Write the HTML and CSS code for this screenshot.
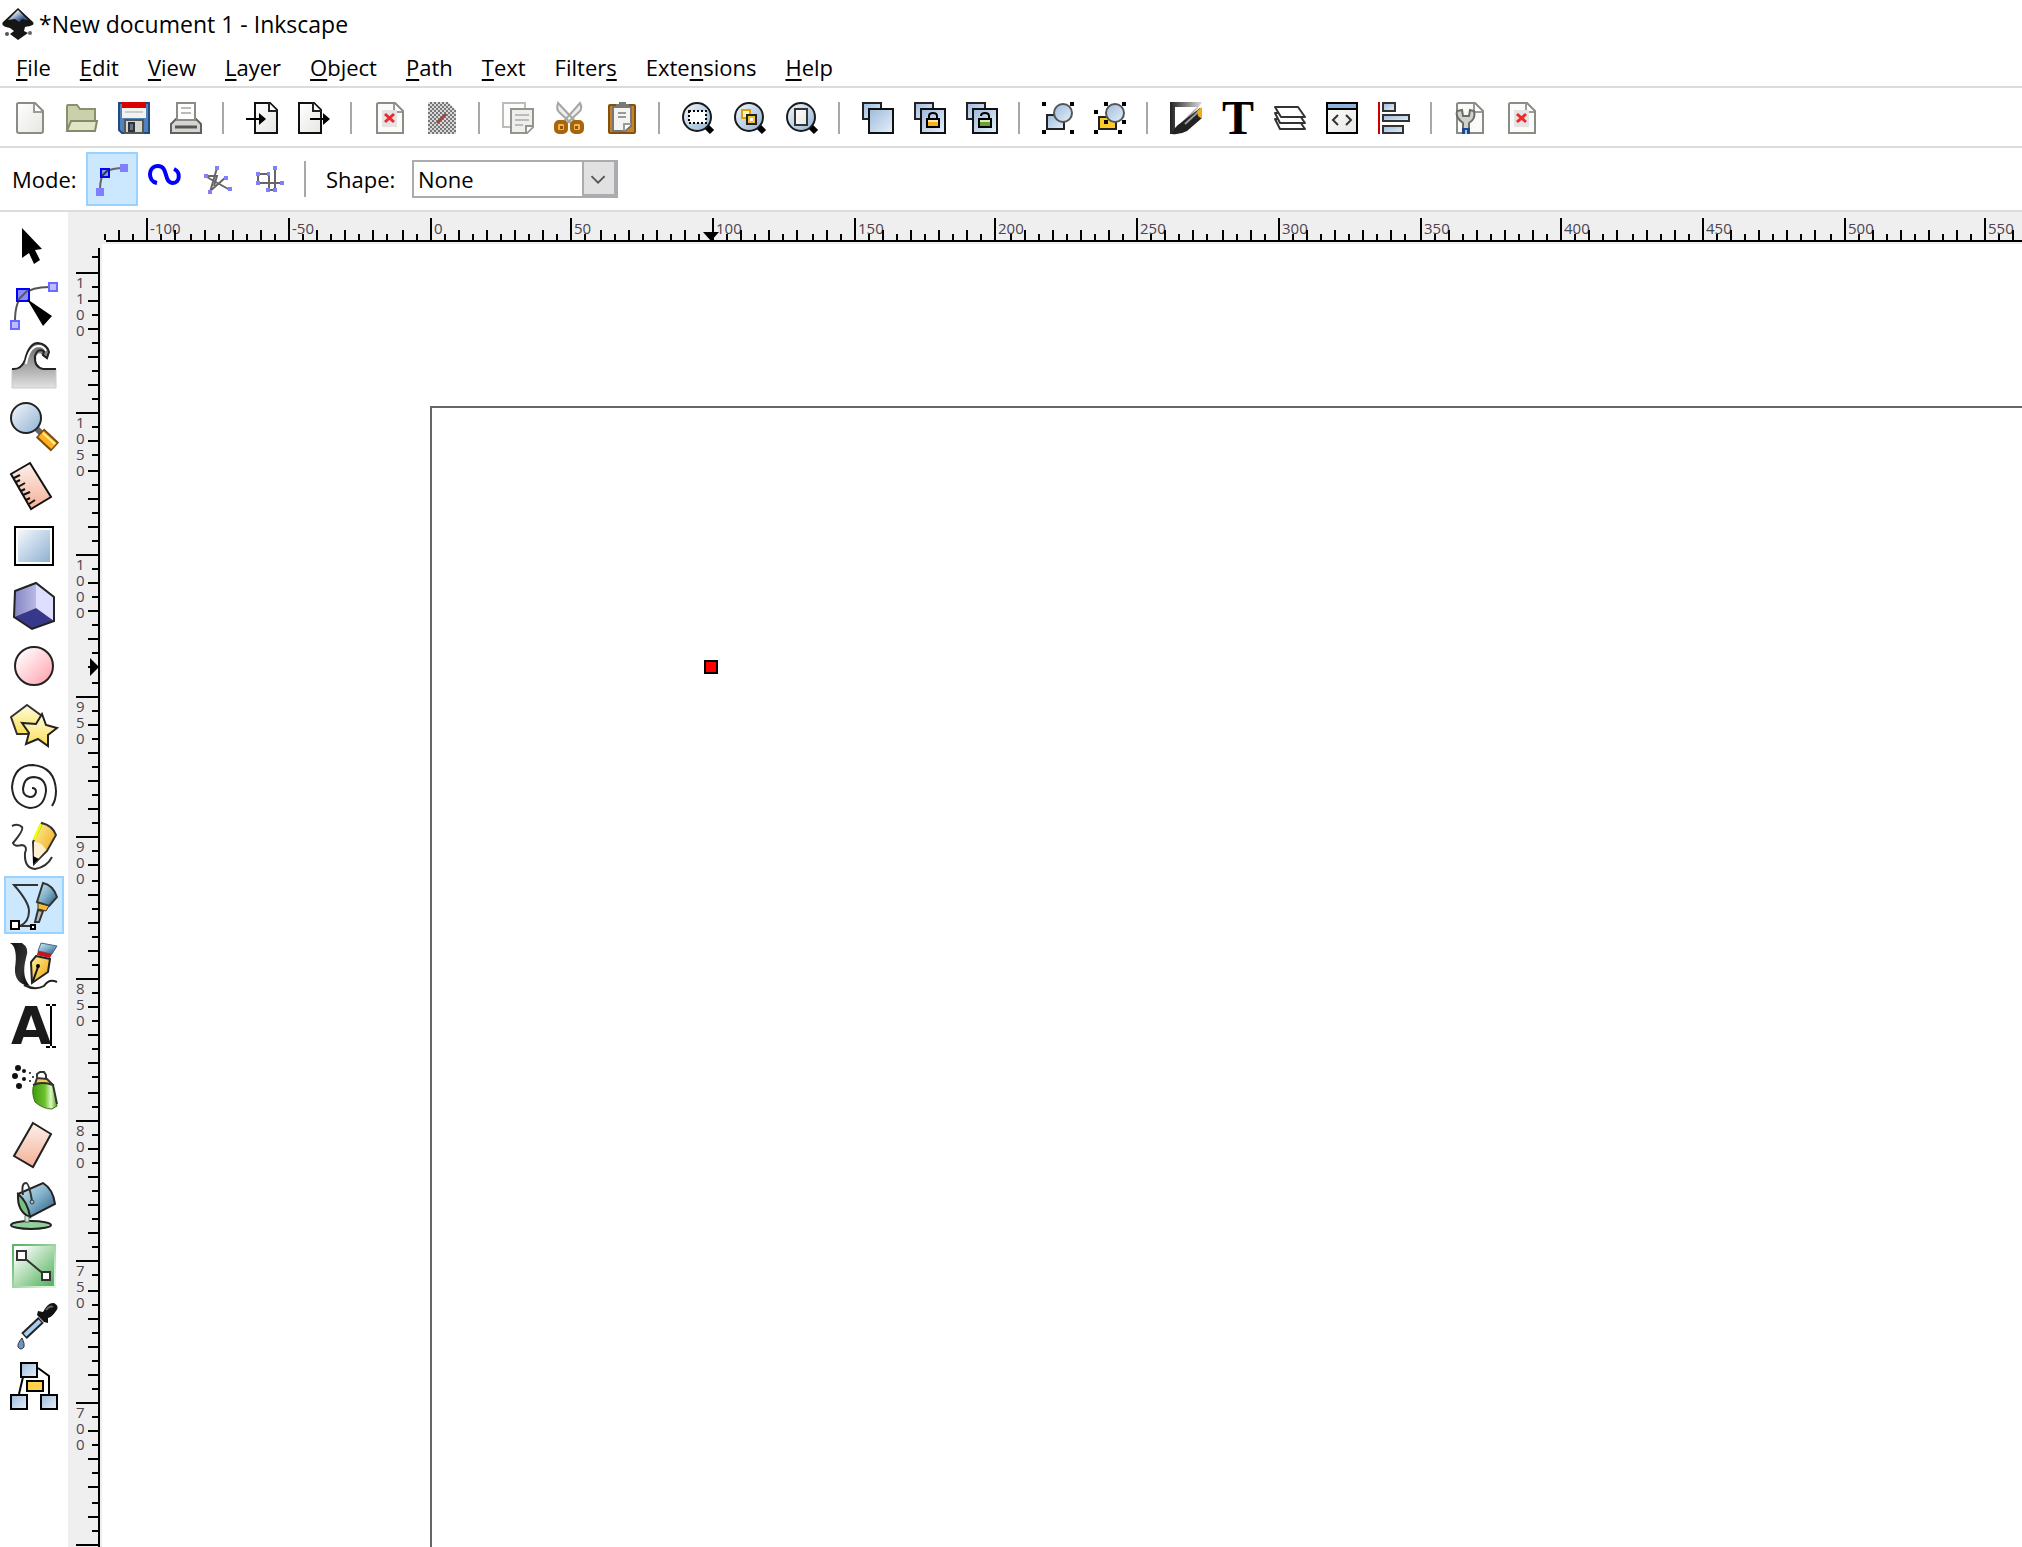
FILE: index.html
```html
<!DOCTYPE html>
<html lang="en">
<head>
<meta charset="utf-8">
<title>*New document 1 - Inkscape</title>
<link rel="stylesheet" href="styles.css">
</head>
<body>
<svg class="defs" aria-hidden="true">
  <defs>
    <linearGradient id="paper" x1="0" y1="0" x2="1" y2="1"><stop offset="0" stop-color="#fff"/><stop offset="1" stop-color="#e6e6e2"/></linearGradient>
    <linearGradient id="blue" x1="0" y1="0" x2="1" y2="1"><stop offset="0" stop-color="#f4f8fc"/><stop offset="1" stop-color="#8fb1d3"/></linearGradient>
    <linearGradient id="bluerev" x1="0" y1="0" x2="1" y2="1"><stop offset="0" stop-color="#9dbbdc"/><stop offset="1" stop-color="#e6eff8"/></linearGradient>
    <linearGradient id="steel" x1="0" y1="0" x2="1" y2="1"><stop offset="0" stop-color="#d5ecf2"/><stop offset=".5" stop-color="#7fb0c8"/><stop offset="1" stop-color="#27517f"/></linearGradient>
    <linearGradient id="pink" x1="0" y1="0" x2="1" y2="1"><stop offset=".1" stop-color="#fff"/><stop offset="1" stop-color="#ff9ca8"/></linearGradient>
    <linearGradient id="peach" x1="0" y1="0" x2="0" y2="1"><stop offset="0" stop-color="#fdf0ea"/><stop offset="1" stop-color="#f3b096"/></linearGradient>
    <linearGradient id="yellow" x1="0" y1="0" x2="0" y2="1"><stop offset="0" stop-color="#fffbe6"/><stop offset="1" stop-color="#fbe04e"/></linearGradient>
    <linearGradient id="gold" x1="0" y1="0" x2="1" y2="1"><stop offset="0" stop-color="#fff3a0"/><stop offset="1" stop-color="#ee9a00"/></linearGradient>
    <linearGradient id="green" x1="0" y1="0" x2="1" y2="0"><stop offset="0" stop-color="#3f9a0b"/><stop offset=".5" stop-color="#6cc32b"/><stop offset=".75" stop-color="#dcf8c0"/><stop offset="1" stop-color="#4ea318"/></linearGradient>
    <linearGradient id="meadow" x1="0" y1="0" x2="1" y2="1"><stop offset=".1" stop-color="#fff"/><stop offset=".9" stop-color="#5db766"/></linearGradient>
    <linearGradient id="meadow-edge" x1="0" y1="0" x2="1" y2="1"><stop offset=".1" stop-color="#5db766"/><stop offset=".9" stop-color="#e0f2e2"/></linearGradient>
    <linearGradient id="gray" x1="0" y1="0" x2="0" y2="1"><stop offset="0" stop-color="#666"/><stop offset="1" stop-color="#e2e2e2"/></linearGradient>
    <linearGradient id="ink" x1="0" y1="0" x2="1" y2="1"><stop offset="0" stop-color="#111"/><stop offset=".6" stop-color="#333"/><stop offset="1" stop-color="#000"/></linearGradient>
    <linearGradient id="frame" x1="0" y1="0" x2="1" y2="0"><stop offset="0" stop-color="#222"/><stop offset="1" stop-color="#ddd"/></linearGradient>
    <linearGradient id="purple" x1="0" y1="0" x2="1" y2="0"><stop offset="0" stop-color="#8484c4"/><stop offset="1" stop-color="#b9b9e4"/></linearGradient>
    <linearGradient id="logo" x1="0" y1="0" x2="1" y2="1"><stop offset=".2" stop-color="#fff"/><stop offset=".7" stop-color="#3d5f94"/></linearGradient>
    <pattern id="dither" width="4" height="4" patternUnits="userSpaceOnUse"><path d="M0 0h2v2H0zM2 2h2v2H2z" fill="#777"/></pattern>
  </defs>
</svg>

<header class="titlebar">
  <svg class="logo" viewBox="0 0 32 34"><path d="M16 1 31 15C33 18 29 19 23 20L22 24 26 26 16 33 8 27 12 24 8 21C2 20-1 18 1 15Z" fill="#161616"/><path d="M16 3 26 13 20 12 17 15 13 12 6 13Z" fill="url(#logo)"/><circle cx="5" cy="27" r="2" fill="#555"/><circle cx="28" cy="26" r="2" fill="#666"/></svg>
  <h1 class="title">*New document 1 - Inkscape</h1>
</header>

<nav class="menubar" aria-label="Main menu">
  <button><u>F</u>ile</button><button><u>E</u>dit</button><button><u>V</u>iew</button><button><u>L</u>ayer</button><button><u>O</u>bject</button><button><u>P</u>ath</button><button><u>T</u>ext</button><button>Filter<u>s</u></button><button>Exte<u>n</u>sions</button><button><u>H</u>elp</button>
</nav>

<div class="toolbar" role="toolbar" aria-label="Commands">
  <button aria-label="New"><svg viewBox="0 0 32 32"><path d="M4 1H21L29 9V29Q29 31 27 31H5Q3 31 3 29V2Z" fill="url(#paper)" stroke="#8a8c86" stroke-width="2"/><path d="M20 2V10H28" fill="#fff" stroke="#9a9c96" stroke-width="2"/></svg></button>
  <button aria-label="Open"><svg viewBox="0 0 32 32"><path d="M1 28V4Q1 3 2 3H11L14 7H29V20" fill="#c9d0aa" stroke="#8b8f72" stroke-width="2"/><path d="M1 29 5 19H31L29 29Z" fill="#dfe6c4" stroke="#84886c" stroke-width="2"/></svg></button>
  <button aria-label="Save"><svg viewBox="0 0 32 32"><path d="M1 1H31V31H4L1 28Z" fill="#4f83bd" stroke="#234a80" stroke-width="2"/><path d="M4 0H28V6H4Z" fill="#d90000"/><path d="M4 6H28V16H4Z" fill="#f2f2ee"/><path d="M7 10H25" stroke="#ccc" stroke-width="2"/><path d="M7 18H25V31H7Z" fill="#d3d7cf" stroke="#555753" stroke-width="2"/><rect x="11" y="21" width="5" height="8" fill="#5a7396" stroke="#333" stroke-width="2"/></svg></button>
  <button aria-label="Print"><svg viewBox="0 0 32 32"><path d="M1 22 6 17H26L31 22V31H1Z" fill="#d3d5d0" stroke="#5f615c" stroke-width="2"/><path d="M7 18V1H25V18Z" fill="#fff" stroke="#8a8c86" stroke-width="2"/><path d="M11 6H21M11 11H21" stroke="#bbb" stroke-width="2"/><path d="M5 25H27" stroke="#555" stroke-width="3"/></svg></button>
  <span class="sep"></span>
  <button aria-label="Import"><svg viewBox="0 0 32 32"><path d="M9 1H24L31 8V31H9Z" fill="url(#paper)" stroke="#111" stroke-width="2"/><path d="M23 1V9H31" fill="#fff" stroke="#222" stroke-width="2"/><path d="M0 17H14" stroke="#000" stroke-width="2"/><path d="M13 11 20 17 13 23Z"/></svg></button>
  <button aria-label="Export"><svg viewBox="0 0 32 32"><path d="M1 1H16L23 8V31H1Z" fill="url(#paper)" stroke="#111" stroke-width="2"/><path d="M15 1V9H23" fill="#fff" stroke="#222" stroke-width="2"/><path d="M12 17H27" stroke="#000" stroke-width="2"/><path d="M25 11 32 17 25 23Z"/></svg></button>
  <span class="sep"></span>
  <button aria-label="Undo"><svg viewBox="0 0 32 32"><path d="M4 1H21L29 9V31H3V2Z" fill="#fbfbfa" stroke="#8a8c86" stroke-width="2"/><path d="M20 2V10H28" fill="#fff" stroke="#9a9c96" stroke-width="2"/><rect x="8" y="8" width="15" height="17" fill="#e4e4e4"/><path d="M11 12 20 20M20 12 11 20" stroke="#ef2929" stroke-width="3"/></svg></button>
  <button aria-label="Redo"><svg viewBox="0 0 32 32"><path d="M3 0H22L30 8V32H2V1Z" fill="#d8d8d8"/><path d="M3 0H22L30 8V32H2V1Z" fill="url(#dither)"/><path d="M11 21 20 12" stroke="#a23a3a" stroke-width="2"/></svg></button>
  <span class="sep"></span>
  <button aria-label="Copy"><svg viewBox="0 0 32 32"><path d="M1 1H23V25H1Z" fill="#fcfcfc" stroke="#bcbdb9" stroke-width="2"/><path d="M9 7H31V25L25 31H9Z" fill="#eeeeec" stroke="#92948e" stroke-width="2"/><path d="M13 13H27M13 18H27M13 23H21" stroke="#bbb" stroke-width="2"/><path d="M31 24H24V31" fill="#fff" stroke="#92948e" stroke-width="2"/></svg></button>
  <button aria-label="Cut"><svg viewBox="0 0 32 32"><path d="M4 1Q2 7 5 10L18 22 20 18ZM26 1Q29 7 25 10L12 22 11 18Z" fill="#eee" stroke="#a4a6a0" stroke-width="2"/><rect x="2" y="20" width="10" height="10" rx="3" fill="#f3b254" stroke="#a8650a" stroke-width="4"/><rect x="18" y="20" width="10" height="10" rx="3" fill="#f3b254" stroke="#a8650a" stroke-width="4"/><path d="M6 24H9V27H6ZM21 24H24V27H21Z" fill="#8f5902"/></svg></button>
  <button aria-label="Paste"><svg viewBox="0 0 32 32"><rect x="3" y="3" width="26" height="28" rx="1" fill="#c4842a" stroke="#84500a" stroke-width="2"/><path d="M7 5H25V24L19 29H7Z" fill="#f4f4f2" stroke="#777" stroke-width="2"/><path d="M10 5V2H13V0H20V2H23V6H10Z" fill="#777973"/><path d="M12 11H20M12 15H20" stroke="#999" stroke-width="2"/><path d="M25 22H18V29" fill="#fff" stroke="#999" stroke-width="2"/></svg></button>
  <span class="sep"></span>
  <button aria-label="Zoom selection"><svg viewBox="0 0 32 32"><path d="M24 24 30 30" stroke="#000" stroke-width="6"/><circle cx="15" cy="15" r="14" fill="url(#blue)" stroke="#1a1a1a" stroke-width="2"/><rect x="7" y="9" width="17" height="12" fill="#fff" stroke="#000" stroke-width="2" stroke-dasharray="2 2"/></svg></button>
  <button aria-label="Zoom drawing"><svg viewBox="0 0 32 32"><path d="M24 24 30 30" stroke="#000" stroke-width="6"/><circle cx="15" cy="15" r="14" fill="url(#blue)" stroke="#1a1a1a" stroke-width="2"/><rect x="8" y="8" width="8" height="8" fill="#fff3c4" stroke="#e0a000" stroke-width="2"/><rect x="13" y="13" width="9" height="9" fill="#ffe9a8" stroke="#222" stroke-width="2"/><rect x="15" y="15" width="5" height="5" fill="#fff" stroke="#f5c230" stroke-width="2"/></svg></button>
  <button aria-label="Zoom page"><svg viewBox="0 0 32 32"><path d="M24 24 30 30" stroke="#000" stroke-width="6"/><circle cx="15" cy="15" r="14" fill="url(#blue)" stroke="#1a1a1a" stroke-width="2"/><rect x="9" y="7" width="12" height="16" fill="url(#paper)" stroke="#333" stroke-width="2"/></svg></button>
  <span class="sep"></span>
  <button aria-label="Duplicate"><svg viewBox="0 0 32 32"><rect x="1" y="1" width="18" height="16" fill="url(#bluerev)" stroke="#222" stroke-width="2"/><rect x="7" y="7" width="24" height="24" fill="url(#bluerev)" stroke="#111" stroke-width="2"/></svg></button>
  <button aria-label="Clone"><svg viewBox="0 0 32 32"><rect x="1" y="1" width="18" height="16" fill="url(#bluerev)" stroke="#222" stroke-width="2"/><rect x="7" y="7" width="24" height="24" fill="url(#bluerev)" stroke="#111" stroke-width="2"/><path d="M15 17V14Q15 11 19 11T23 14V17" fill="none" stroke="#000" stroke-width="2"/><rect x="13" y="17" width="12" height="8" fill="#f7b21a" stroke="#000" stroke-width="2"/><path d="M14 18H24V20H14Z" fill="#ffe9a0"/></svg></button>
  <button aria-label="Unlink clone"><svg viewBox="0 0 32 32"><rect x="1" y="1" width="18" height="16" fill="url(#bluerev)" stroke="#222" stroke-width="2"/><rect x="7" y="7" width="24" height="24" fill="url(#bluerev)" stroke="#111" stroke-width="2"/><path d="M15 14Q15 11 19 11T23 14V17" fill="none" stroke="#000" stroke-width="2"/><rect x="13" y="17" width="12" height="8" fill="#69a033" stroke="#000" stroke-width="2"/><path d="M14 18H24V20H14Z" fill="#d3efb0"/></svg></button>
  <span class="sep"></span>
  <button aria-label="Group"><svg viewBox="0 0 32 32"><path d="M0 0H4V4H0ZM28 0H32V4H28ZM0 28H4V32H0ZM28 28H32V32H28Z"/><rect x="5" y="13" width="17" height="14" fill="url(#bluerev)" stroke="#222" stroke-width="2"/><circle cx="21" cy="11" r="9" fill="url(#bluerev)" stroke="#555" stroke-width="2"/></svg></button>
  <button aria-label="Ungroup"><svg viewBox="0 0 32 32"><rect x="5" y="15" width="17" height="12" fill="#ffc928" stroke="#222" stroke-width="2"/><circle cx="21" cy="11" r="9" fill="url(#bluerev)" stroke="#555" stroke-width="2"/><path d="M0 8H4V12H0ZM10 0H14V4H10ZM28 0H32V4H28ZM28 18H32V22H28ZM10 18H14V22H10ZM0 28H4V32H0ZM24 28H28V32H24Z"/></svg></button>
  <span class="sep"></span>
  <button aria-label="Fill and stroke"><svg viewBox="0 0 32 32"><path d="M0 0H32L28 6 3 32H0Z" fill="url(#frame)"/><path d="M5 5H27L5 27Z" fill="#fff"/><path d="M2 32Q4 25 12 20L30 6 32 8V16L17 29Q10 33 2 32Z" fill="#222"/><path d="M15 22 29 9" stroke="#999" stroke-width="2"/><path d="M27 9 32 5V17L28 14Z" fill="#f0ad14"/></svg></button>
  <button aria-label="Text and font"><svg viewBox="0 0 32 32"><text class="glyph-t" x="16" y="32" text-anchor="middle">T</text></svg></button>
  <button aria-label="Layers"><svg viewBox="0 0 32 32"><g fill="#fff" stroke="#333" stroke-width="2" stroke-linejoin="round"><path d="M1 17 6 27H31L24 17Z"/><path d="M1 11 6 21H31L24 11Z"/><path d="M1 5H24L31 15H7Z"/></g></svg></button>
  <button aria-label="XML editor"><svg viewBox="0 0 32 32"><rect x="1" y="1" width="30" height="30" fill="url(#paper)" stroke="#000" stroke-width="2"/><path d="M2 2H30V6H2Z" fill="#8fb4dc"/><path d="M1 7H31" stroke="#000" stroke-width="2"/><path d="M12 13 7 18 12 23M20 13 25 18 20 23" fill="none" stroke="#333" stroke-width="2"/></svg></button>
  <button aria-label="Align and distribute"><svg viewBox="0 0 32 32"><path d="M0 0H2V32H0Z" fill="#c00"/><g fill="url(#bluerev)" stroke="#333" stroke-width="2"><rect x="5" y="1" width="12" height="8"/><rect x="5" y="13" width="26" height="6"/><rect x="5" y="24" width="20" height="7"/></g></svg></button>
  <span class="sep"></span>
  <button aria-label="Preferences"><svg viewBox="0 0 32 32"><path d="M4 1H21L29 9V31H3V2Z" fill="#fafaf8" stroke="#8a8c86" stroke-width="2"/><path d="M20 2V10H28" fill="#fff" stroke="#9a9c96" stroke-width="2"/><path d="M3 9Q1 15 9 21V27H15V21Q22 17 20 9L16 8 15 14H9L8 8Z" fill="#d0d1cd" stroke="#6b6d68" stroke-width="2"/><path d="M8 26H16V32H8Z" fill="#204a87"/><path d="M11 28H13V32H11Z" fill="#9cf"/></svg></button>
  <button aria-label="Document properties"><svg viewBox="0 0 32 32"><path d="M4 1H21L29 9V31H3V2Z" fill="#fbfbfa" stroke="#8a8c86" stroke-width="2"/><path d="M20 2V10H28" fill="#fff" stroke="#9a9c96" stroke-width="2"/><rect x="8" y="8" width="15" height="17" fill="#e4e4e4"/><path d="M11 12 20 20M20 12 11 20" stroke="#ef2929" stroke-width="3"/></svg></button>
</div>

<div class="optionbar" role="toolbar" aria-label="Tool options">
  <span class="label mode-label">Mode:</span>
  <button class="on" aria-label="Bezier path"><svg viewBox="0 0 32 32"><path d="M4 26Q4 13 9 8 16 4 28 4" fill="none" stroke="#666" stroke-width="2"/><path d="M24 0H32V8H24ZM0 24H8V32H0Z" fill="#8080ff"/><rect x="5" y="5" width="8" height="8" fill="#7b9bf0" stroke="#00f" stroke-width="2"/><path d="M6 12 12 6" stroke="#335" stroke-width="2"/></svg></button>
  <button aria-label="Spiro path"><svg viewBox="0 0 32 32"><path d="M9 19C-1 17 0 2 10 2 21 2 15 19 25 19 32 19 33 8 26 5" fill="none" stroke="#00f" stroke-width="4"/></svg></button>
  <button aria-label="Straight segments"><svg viewBox="0 0 32 32"><path d="M17 4 10 28M5 12 30 26M26 13 9 28M5 12H17L14 22" fill="none" stroke="#666" stroke-width="2"/><path d="M15 2H19V6H15ZM4 10H8V14H4ZM24 12H28V16H24ZM28 23H32V27H28ZM8 26H12V30H8Z" fill="#8080ff"/></svg></button>
  <button aria-label="Paraxial segments"><svg viewBox="0 0 32 32"><path d="M6 10H17V26H23V4M6 10V19H30" fill="none" stroke="#666" stroke-width="2"/><path d="M4 8H8V12H4ZM4 17H8V21H4ZM21 2H25V6H21ZM28 17H32V21H28ZM15 8H18V12H15ZM14 24H18V28H14ZM21 24H25V28H21Z" fill="#8080ff"/></svg></button>
  <span class="sep"></span>
  <label class="label shape-label" for="shape">Shape:</label>
  <span class="combo">
    <select id="shape"><option>None</option></select>
    <svg class="arrow" viewBox="0 0 32 34"><path d="M8 15 15 22 22 15" fill="none" stroke="#555" stroke-width="2"/></svg>
  </span>
</div>

<main class="workspace">
  <div class="toolbox" role="toolbar" aria-label="Tools">
    <button aria-label="Selector"><svg viewBox="0 0 48 48"><path d="M12 6 32 27 25 28 30 38 24 42 19 31 12 36Z"/></svg></button>
    <button aria-label="Node editor"><svg viewBox="0 0 48 48"><path d="M5 39Q5 19 14 12 22 5 39 5" fill="none" stroke="#555" stroke-width="2"/><rect x="39" y="1" width="8" height="8" fill="#bcbcff" stroke="#6a6aff" stroke-width="2"/><rect x="1" y="39" width="8" height="8" fill="#bcbcff" stroke="#6a6aff" stroke-width="2"/><rect x="7" y="7" width="12" height="12" fill="#8a8aff" stroke="#00f" stroke-width="2"/><path d="M8 18 18 8" stroke="#557" stroke-width="2"/><path d="M17 17 42 34 33 44Z"/></svg></button>
    <button aria-label="Tweak"><svg viewBox="0 0 48 48"><path d="M2 27Q11 28 15 18 19 1 28 1 37 2 39 10L37 17 32 13Q29 9 26 14 24 25 33 27H46V46H2Z" fill="url(#gray)" stroke="#ccc"/><path d="M2 27Q11 28 15 18 19 1 28 1 37 2 39 10L37 16 33 13 34 9Q27 6 25 14 24 25 33 27H46" fill="none" stroke="#222" stroke-width="2"/><path d="M16 22Q19 5 28 4 34 4 36 9" fill="none" stroke="#fff" stroke-width="2"/></svg></button>
    <button aria-label="Zoom"><svg viewBox="0 0 48 48"><path d="M27 27 32 32" stroke="#666" stroke-width="6"/><path d="M30 31 45 45" stroke="#7a4a10" stroke-width="12"/><path d="M31 32 44 44" stroke="#ffb21c" stroke-width="8"/><path d="M33 31 45 42" stroke="#fff0a0" stroke-width="2"/><circle cx="16" cy="16" r="15" fill="url(#blue)" stroke="#222" stroke-width="2"/></svg></button>
    <button aria-label="Measure"><svg viewBox="0 0 48 48"><path d="M1 12 20 1 41 35 21 47Z" fill="url(#peach)" stroke="#111" stroke-width="2"/><path d="M4 16 10 13M6 20 10 18M8 25 15 21M11 29 15 27M13 33 20 30M16 38 20 36M19 42 25 38" stroke="#111" stroke-width="2"/></svg></button>
    <button aria-label="Rectangle"><svg viewBox="0 0 48 48"><rect x="5" y="5" width="38" height="38" fill="#fff" stroke="#000" stroke-width="2"/><rect x="8" y="8" width="32" height="32" fill="url(#blue)"/></svg></button>
    <button aria-label="3D box"><svg viewBox="0 0 48 48"><path d="M5 9 26 1V26L4 35Z" fill="url(#purple)"/><path d="M26 1 44 15V39L26 26Z" fill="#dedeff"/><path d="M4 35 26 26 44 39 22 47Z" fill="#38388a"/><path d="M5 9 26 1 44 15V39L22 47 4 35Z" fill="none" stroke="#222" stroke-width="2"/></svg></button>
    <button aria-label="Ellipse"><svg viewBox="0 0 48 48"><circle cx="24" cy="24" r="19" fill="url(#pink)" stroke="#222" stroke-width="2"/></svg></button>
    <button aria-label="Star"><svg viewBox="0 0 48 48"><path d="M17 3 32 14 28 32H7L1 15Z" fill="url(#yellow)" stroke="#333" stroke-width="2"/><path d="M32 12 36 23 47 26 38 33V44L28 37 16 42 19 31 12 21 26 22Z" fill="url(#yellow)" stroke="#222" stroke-width="2"/></svg></button>
    <button aria-label="Spiral"><svg viewBox="0 0 48 48"><path d="M22 26Q26 26 26 30 25 35 20 35 13 34 13 27 14 15 24 15 36 16 36 29 34 46 20 46 3 43 2 25 4 3 23 3 45 5 46 29 46 38 42 44" fill="none" stroke="#222" stroke-width="2"/></svg></button>
    <button aria-label="Pencil"><svg viewBox="0 0 48 48"><path d="M2 4Q8 1 12 5 14 8 3 21 4 25 12 23 18 24 15 31 14 46 25 47 37 45 42 35" fill="none" stroke="#333" stroke-width="2"/><path d="M32 1Q43 4 46 13L37 29 24 42 23 20Z" fill="url(#gold)" stroke="#333" stroke-width="2"/><path d="M24 20Q31 19 36 28L28 37 24 38Z" fill="#fff1d0"/><path d="M31 2 24 18" stroke="#ef0" stroke-width="3"/><path d="M23 34 29 37 23 42Z"/></svg></button>
    <button class="on" aria-label="Bezier pen"><svg viewBox="0 0 48 48"><path d="M28 3H4Q19 20 19 29 19 40 10 44H22" fill="none" stroke="#333" stroke-width="2"/><rect x="1" y="39" width="8" height="8" fill="#fff" stroke="#000" stroke-width="2"/><rect x="21" y="43" width="4" height="4" fill="#fff" stroke="#000" stroke-width="2"/><path d="M33 1Q43 3 47 15L39 24 27 20Z" fill="url(#steel)" stroke="#333" stroke-width="2"/><path d="M28 21 39 24 36 29 28 27Z" fill="#f3bb35" stroke="#333"/><path d="M28 28 33 29 29 40 25 40Z" fill="#bbb" stroke="#333" stroke-width="2"/></svg></button>
    <button aria-label="Calligraphy"><svg viewBox="0 0 48 48"><path d="M0 1H12Q20 6 16 16 11 35 20 44 4 42 5 26 8 5 0 1Z" fill="url(#ink)"/><path d="M14 43Q25 49 34 44 39 36 47 40" fill="none" stroke="#222" stroke-width="2"/><path d="M31 1 47 4 42 12 28 9Z" fill="url(#steel)" stroke="#468"/><path d="M28 9 42 12 40 16 27 13Z" fill="#c4141e"/><path d="M26 14 40 17 38 30 22 41 21 20Z" fill="url(#gold)" stroke="#222" stroke-width="2"/><path d="M28 25 23 39" stroke="#111" stroke-width="2"/><circle cx="28" cy="24" r="2"/></svg></button>
    <button aria-label="Text"><svg viewBox="0 0 48 48"><text class="glyph-a" x="21" y="42" text-anchor="middle">A</text><path d="M36 3H40M42 3H46M36 45H40M42 45H46M41 4V44" stroke="#000" stroke-width="2"/></svg></button>
    <button aria-label="Spray"><svg viewBox="0 0 48 48"><g fill="#111"><circle cx="8" cy="6" r="3"/><circle cx="5" cy="14" r="3"/><circle cx="9" cy="24" r="3"/><circle cx="14" cy="9" r="2"/><circle cx="14" cy="17" r="2"/><circle cx="20" cy="11" r="1"/><circle cx="20" cy="19" r="1"/><circle cx="23" cy="15" r="1"/></g><path d="M27 15V12L30 10H34L36 13V17" fill="#fff" stroke="#333" stroke-width="2"/><path d="M25 22 27 16 37 17 42 22Z" fill="#f6c75b" stroke="#333" stroke-width="2"/><path d="M24 22Q33 19 43 23L47 44 42 47Q33 47 25 40 21 30 24 22Z" fill="url(#green)" stroke="#386f18"/><path d="M23 23Q33 19 43 23L47 42" fill="none" stroke="#333" stroke-width="2"/></svg></button>
    <button aria-label="Eraser"><svg viewBox="0 0 48 48"><path d="M23 1 41 12 23 45 4 34Z" fill="url(#peach)" stroke="#222" stroke-width="2"/></svg></button>
    <button aria-label="Paint bucket"><svg viewBox="0 0 48 48"><ellipse cx="21" cy="43" rx="20" ry="4" fill="#91cf9b" stroke="#222" stroke-width="2"/><path d="M8 12 33 1Q43 7 45 22L20 35Z" fill="url(#steel)" stroke="#222" stroke-width="2"/><path d="M8 12Q18 20 20 35 7 30 8 12Z" fill="#79bd80" stroke="#222" stroke-width="2"/><path d="M15 34V40H19V35" fill="#cfe9cf" stroke="#666"/><path d="M13 13Q11 1 16 1 19 1 22 19" fill="none" stroke="#333" stroke-width="2"/><circle cx="22" cy="20" r="2" fill="#abc" stroke="#333"/></svg></button>
    <button aria-label="Gradient"><svg viewBox="0 0 48 48"><rect x="3" y="3" width="42" height="42" fill="url(#meadow)" stroke="url(#meadow-edge)" stroke-width="2"/><path d="M12 14 36 34" stroke="#333" stroke-width="2"/><rect x="7" y="9" width="9" height="9" fill="#fff" stroke="#333" stroke-width="2"/><rect x="32" y="30" width="8" height="8" fill="#fff" stroke="#333" stroke-width="2"/></svg></button>
    <button aria-label="Dropper"><svg viewBox="0 0 48 48"><path d="M31 18 14 34" stroke="#222" stroke-width="8"/><path d="M30 19 15 33" stroke="#a8cdf0" stroke-width="4"/><path d="M28 9 33 10Q38 0 44 1 50 4 46 9 42 15 38 16L38 21 34 20 27 13Z" fill="#111"/><path d="M36 8Q40 3 43 5" fill="none" stroke="#666" stroke-width="2"/><path d="M12 36Q7 42 8 45 11 49 14 45 15 42 12 36Z" fill="#6b97c4" stroke="#333"/></svg></button>
    <button aria-label="Connector"><svg viewBox="0 0 48 48"><path d="M13 15 9 32M28 6 39 14V32" fill="none" stroke="#000" stroke-width="2"/><g fill="url(#bluerev)" stroke="#000" stroke-width="2"><rect x="11" y="1" width="16" height="14"/><rect x="1" y="33" width="16" height="14"/><rect x="31" y="33" width="16" height="14"/></g><rect x="17" y="19" width="16" height="10" fill="#ffd24a" stroke="#000" stroke-width="2"/></svg></button>
  </div>
  <div class="view">
    <svg class="ruler ruler-x" id="ruler-x"></svg>
    <svg class="ruler ruler-y" id="ruler-y"></svg>
    <div class="canvas">
      <div class="page"></div>
      <span class="handle"></span>
    </div>
  </div>
</main>
<script src="rulers.js"></script>
</body>
</html>
```
FILE: styles.css
```css
* { box-sizing: border-box; }

body {
  margin: 0;
  height: 100vh;
  display: flex;
  flex-direction: column;
  background: #fff;
  color: #000;
  font: 22px/30px "Open Sans", "Noto Sans", sans-serif;
  overflow: hidden;
}

button {
  margin: 0;
  padding: 0;
  border: 2px solid transparent;
  background: none;
  color: inherit;
  font: inherit;
}

svg { display: block; flex: none; overflow: visible; }
.defs { position: absolute; width: 0; height: 0; }

.titlebar { display: flex; align-items: center; height: 48px; padding-left: 2px; gap: 5px; flex: none; }
.logo { width: 32px; height: 34px; }
.title { margin: 0; font-size: 23px; font-weight: 400; }

.menubar { display: flex; align-items: center; gap: 1px; height: 38px; padding-left: 2px; flex: none; }
.menubar button { border: 0; padding: 0 14px; }
.menubar u { text-decoration-thickness: 2px; text-underline-offset: 3px; text-decoration-skip-ink: none; }

.toolbar, .optionbar {
  display: flex;
  align-items: center;
  flex: none;
  border-top: 2px solid #dcdcdc;
}
.toolbar { height: 60px; padding: 2px 0 0 4px; }
.toolbar button { width: 52px; padding: 8px; }
.toolbar svg, .optionbar button svg { width: 32px; height: 32px; }

.sep { width: 2px; height: 32px; margin: 0 12px 0 10px; background: #a8a8a8; flex: none; }

.optionbar { height: 64px; }
.optionbar button { width: 52px; height: 54px; padding: 10px 8px 8px; }
.optionbar .sep { height: 36px; margin: 0 20px 0 10px; }
.mode-label { width: 86px; padding-left: 12px; }
.shape-label { width: 86px; }
.optionbar .on, .toolbox .on { background: #cce8ff; border-color: #99d1ff; }

.combo { display: grid; width: 206px; height: 38px; }
.combo select {
  grid-area: 1 / 1;
  appearance: none;
  border: 2px solid #ababb0;
  border-radius: 0;
  padding: 0 40px 0 4px;
  background: #fff;
  color: #000;
  font: inherit;
}
.arrow {
  grid-area: 1 / 1;
  justify-self: end;
  width: 36px;
  height: 38px;
  background: #e1e1e1;
  border: 2px solid #ababb0;
  border-right-width: 4px;
  border-bottom-width: 4px;
  pointer-events: none;
}

.workspace { display: flex; flex: 1; min-height: 0; border-top: 2px solid #dcdcdc; }
.toolbox { display: flex; flex-direction: column; gap: 2px; width: 68px; padding: 4px; flex: none; }
.toolbox button { width: 60px; height: 58px; padding: 4px 4px 2px; flex: none; }
.toolbox svg { width: 48px; height: 48px; }

.glyph-a { font: bold 52px "DejaVu Sans", sans-serif; fill: #1a1a1a; }
.glyph-t { font: bold 48px "Liberation Serif", serif; }

.view {
  flex: 1;
  min-width: 0;
  display: grid;
  grid-template: 32px minmax(0, 1fr) / 34px minmax(0, 1fr);
  background: #efefef;
}
.ruler { width: 100%; height: 100%; }
.ruler text { font-size: 15px; fill: #4c4550; }
.ruler-x { grid-area: 1 / 2; }
.ruler-y { grid-area: 2 / 1; }

.canvas { grid-area: 2 / 2; position: relative; display: flex; padding: 162px 0 0 328px; background: #fff; overflow: hidden; }
.page { flex: 1; border: solid #666; border-width: 2px 0 0 2px; }
.handle { position: absolute; left: 602px; top: 416px; width: 14px; height: 14px; border: 2px solid #000; background: #f00; }
```
FILE: rulers.js
```js
// Ruler geometry, in device dots that are two pixels wide.
const DOTS_PER_UNIT = 1.4138;
const NS = "http://www.w3.org/2000/svg";
const rulerX = document.getElementById("ruler-x");
const rulerY = document.getElementById("ruler-y");

function add(parent, name, attrs, text) {
  const el = document.createElementNS(NS, name);
  for (const key in attrs) el.setAttribute(key, attrs[key]);
  if (text) el.textContent = text;
  parent.append(el);
  return el;
}

function drawX() {
  const width = rulerX.getBoundingClientRect().width;
  rulerX.replaceChildren();
  let d = `M4 28H${width}V30H4Z`;
  for (let u = -115; ; u += 5) {
    const x = 2 * Math.floor(164.2 + u * DOTS_PER_UNIT);
    if (x > width) break;
    const top = u % 50 === 0 ? 6 : u % 10 === 0 ? 18 : 22;
    d += `M${x} ${top}h2V28h-2Z`;
    if (u % 50 === 0) add(rulerX, "text", { x: x + 4, y: 22 }, String(u));
  }
  add(rulerX, "path", { d });
  add(rulerX, "path", { d: "M601 20H617L609 29Z" });
}

function drawY() {
  const height = rulerY.getBoundingClientRect().height;
  rulerY.replaceChildren();
  let d = `M30 4H32V${height}H30Z`;
  for (let u = 1105; ; u -= 5) {
    const y = 2 * Math.floor(14.05 + (1100 - u) * DOTS_PER_UNIT);
    if (y > height) break;
    const left = u % 50 === 0 ? 8 : u % 10 === 0 ? 20 : 24;
    d += `M${left} ${y}H30v2H${left}Z`;
    // The digits of a label run down the ruler, one below the other.
    if (u % 50 === 0 && y + 16 < height) {
      const label = add(rulerY, "text", {});
      [...String(u)].forEach((digit, i) => add(label, "tspan", { x: 8, y: y + 16 + 16 * i }, digit));
    }
  }
  add(rulerY, "path", { d });
  add(rulerY, "path", { d: "M22 414V432L31 423Z" });
}

function draw() {
  drawX();
  drawY();
}

draw();
window.addEventListener("resize", draw);
```
